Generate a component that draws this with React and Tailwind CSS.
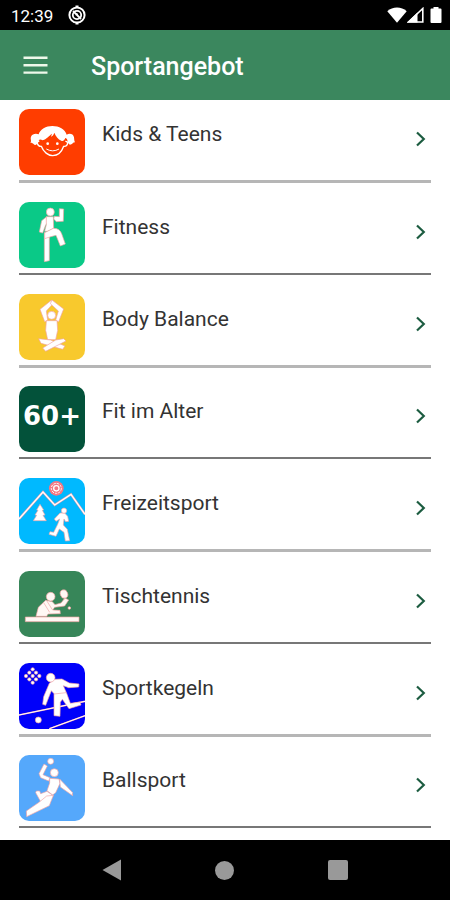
import React from 'react';

const FIGURE = { fill: '#fff', stroke: '#f0a3a3', strokeWidth: 2, strokeLinejoin: 'round' };

const KidsIcon = () => (
  <svg viewBox="27 27 198 198" className="h-full w-full" aria-hidden="true">
    <path
      fill="#fff"
      d="M86 103 C90 88 108 78 127 78 C147 78 165 88 170 104 C178 99 190 101 192 112 C193 118 192 122 195 127 C188 127 187 134 180 134 C175 132 173 127 172 121 C171 116 169 115 166 114 C163 122 158 124 154 122 C144 118 137 108 133 98 C131 105 127 108 123 110 L126 101 C117 107 112 116 98 121 C92 118 88 118 86 122 C84 128 81 133 76 135 C71 134 70 128 61 128 C66 122 60 118 63 110 C67 101 78 100 86 103Z"
    />
    <path
      fill="none"
      stroke="#fff"
      strokeWidth="4"
      d="M88 124 C78 122 81 140 94 139 C100 156 115 167 128 167 C142 167 155 156 161 139 C174 140 177 123 166 124"
    />
    <path fill="none" stroke="#fff" strokeWidth="3" d="M109 147 Q128 158 147 147" />
    <circle cx="113" cy="131" r="4" fill="#fff" />
    <circle cx="142" cy="131" r="4" fill="#fff" />
  </svg>
);

const FitnessIcon = () => (
  <svg viewBox="27 33 198 198" className="h-full w-full" aria-hidden="true">
    <g {...FIGURE}>
      <path d="M148 53 L161 54 L160 91 L139 92 L131 84 L133 76 L148 77Z" />
      <path d="M110 77 L95 89 L88 123 L98 126 L106 104 L112 94Z" />
      <path d="M109 77 L130 77 L131 112 L113 121 L104 121 L109 101Z" />
      <path d="M103 125 L118 125 L118 209 L103 212Z" />
      <path d="M104 125 L130 112 C143 112 151 117 155 128 L166 159 L151 165 L138 133 L119 138 L104 143Z" />
      <circle cx="121" cy="63" r="12" />
    </g>
  </svg>
);

const BalanceIcon = () => (
  <svg viewBox="27 28 198 198" className="h-full w-full" aria-hidden="true">
    <g {...FIGURE}>
      <path d="M125 46 L129 57 L109 79 L113 107 L104 111 L90 74Z" />
      <path d="M126 46 L161 73 L146 111 L137 107 L145 79 L121 57Z" />
      <path d="M109 108 L141 108 L143 137 L137 165 L113 165 L107 137Z" />
      <path d="M86 162 L122 166 L165 184 L158 194 L93 176Z" />
      <path d="M161 162 L168 169 L107 200 L98 190 L137 166Z" />
      <circle cx="125" cy="92" r="12" />
    </g>
  </svg>
);

const LeisureIcon = () => (
  <svg viewBox="27 27 198 198" className="h-full w-full" aria-hidden="true">
    <path d="M27 150 L99 69 L134 108 L183 76 L225 136" fill="none" stroke="#e89aa8" strokeWidth="7" />
    <path d="M27 150 L99 69 L134 108 L183 76 L225 136" fill="none" stroke="#fff" strokeWidth="4" />
    <circle cx="139" cy="58" r="22" fill="#f47883" />
    <circle cx="139" cy="58" r="15" fill="none" stroke="#fff" strokeWidth="3" strokeDasharray="7 3" />
    <circle cx="139" cy="58" r="8" fill="#f47883" stroke="#fff" strokeWidth="4" />
    <g {...FIGURE}>
      <path d="M90 106 L101 123 L97 124 L105 138 L99 139 L109 155 L70 155 L80 139 L75 138 L84 124 L80 123Z" />
      <path d="M150 132 L164 132 L173 142 L176 157 L167 158 L162 150 L160 168 L172 181 L179 215 L166 216 L162 190 L148 180 L138 202 L117 196 L120 188 L131 190 L143 166 L149 150 L138 157 L133 150Z" />
      <circle cx="162" cy="125" r="8" />
    </g>
  </svg>
);

const TableTennisIcon = () => (
  <svg viewBox="27 30 198 198" className="h-full w-full" aria-hidden="true">
    <g {...FIGURE} fill="#fff8f4">
      <path d="M78 166 L85 139 L107 118 L127 122 L135 131 L153 126 L165 111 L176 117 L164 135 L134 139 L128 147 L150 148 L151 158 L114 159 L110 166Z" />
      <path d="M101 125 L119 154 M110 119 L127 146" fill="none" />
      <path d="M166 110 L162 116" fill="none" />
      <circle cx="122" cy="107" r="13" />
      <ellipse cx="162" cy="99" rx="11" ry="13" transform="rotate(-20 162 99)" />
      <rect x="46" y="168" width="161" height="14" />
      <circle cx="178" cy="141" r="4" />
    </g>
  </svg>
);

const BowlingIcon = () => (
  <svg viewBox="27 30 198 198" className="h-full w-full" aria-hidden="true">
    <path d="M27 186 L225 145 M118 227 L225 188" fill="none" stroke="#ef8f9c" strokeWidth="5" />
    <path d="M27 186 L225 145 M118 227 L225 188" fill="none" stroke="#fff" strokeWidth="3" />
    <g {...FIGURE}>
      <path d="M118 91 L134 79 L156 78 L178 90 L207 93 L206 102 L176 104 L160 98 L170 121 L181 151 L210 147 L213 156 L177 167 L157 139 L151 148 L150 190 L132 188 L132 122 L124 113 L107 157 L98 154 L101 131Z" />
      <path d="M132 123 L168 119" fill="none" />
      <circle cx="122" cy="74" r="13" />
      <circle cx="85" cy="201" r="9" />
      <circle cx="68" cy="49" r="5" />
      <circle cx="58" cy="59" r="5" />
      <circle cx="78" cy="59" r="5" />
      <circle cx="48" cy="69" r="5" />
      <circle cx="68" cy="69" r="5" />
      <circle cx="88" cy="69" r="5" />
      <circle cx="58" cy="79" r="5" />
      <circle cx="78" cy="79" r="5" />
      <circle cx="68" cy="89" r="5" />
    </g>
  </svg>
);

const BallIcon = () => (
  <svg viewBox="27 31 198 198" className="h-full w-full" aria-hidden="true">
    <g {...FIGURE}>
      <path d="M102 58 L112 64 L99 90 L120 99 L116 109 L92 99 L87 87Z" />
      <path d="M119 101 L147 103 L150 116 L137 144 L128 151 L111 138 L119 115Z" />
      <path d="M149 103 L187 143 L188 153 L151 127Z" />
      <path d="M111 140 L130 153 L117 174 L92 171 L77 144 L79 139 L89 139 L92 147Z" />
      <path d="M130 152 L118 183 L50 216 L49 199 L87 173 L110 154Z" />
      <circle cx="133" cy="84" r="12" />
      <circle cx="122" cy="50" r="9" />
    </g>
  </svg>
);

const SeniorIcon = () => (
  <span className="font-['DejaVu_Sans',sans-serif] text-[26px] leading-none font-bold text-white pb-1.5">60+</span>
);

const sports = [
  { name: 'Kids & Teens', color: 'bg-[#ff3d00]', icon: KidsIcon },
  { name: 'Fitness', color: 'bg-[#0ac987]', icon: FitnessIcon },
  { name: 'Body Balance', color: 'bg-[#f8c92d]', icon: BalanceIcon },
  { name: 'Fit im Alter', color: 'bg-[#03523a]', icon: SeniorIcon },
  { name: 'Freizeitsport', color: 'bg-[#00b9ff]', icon: LeisureIcon },
  { name: 'Tischtennis', color: 'bg-[#378659]', icon: TableTennisIcon },
  { name: 'Sportkegeln', color: 'bg-[#0000fa]', icon: BowlingIcon },
  { name: 'Ballsport', color: 'bg-[#55a8fb]', icon: BallIcon },
];

const StatusBar = () => (
  <div className="flex h-[30px] items-center bg-black pr-2 pl-[11px] text-white">
    <span className="pt-0.5 text-[17px] leading-none">12:39</span>
    <svg viewBox="0 0 20 20" className="ml-3.5 h-5 w-5" fill="none" stroke="currentColor">
      <circle cx="10" cy="10" r="7.6" strokeWidth="2" />
      <circle cx="10" cy="10" r="4.2" strokeWidth="1.8" />
      <path d="M6 6 L14 14 M9 10.5 L10.5 8.5" strokeWidth="1.8" />
      <path d="M10 .5 V2 M10 18 V19.5" strokeWidth="3" />
    </svg>
    <div className="ml-auto flex items-center">
      <svg viewBox="0 0 20 16" className="h-4 w-5" fill="currentColor">
        <path d="M.3 4.2 C5.5 -.8 14.5 -.8 19.7 4.2 L10 15.8Z" />
      </svg>
      <svg viewBox="0 0 17 16" className="h-4 w-[17px]">
        <path d="M1.5 15 L15.8 1.5 V15Z" fill="none" stroke="currentColor" strokeWidth="1.6" />
        <path d="M0 15.6 L10.5 5.5 V15.6Z" fill="currentColor" />
      </svg>
      <svg viewBox="0 0 12 16" className="ml-1.5 h-4 w-3" fill="currentColor">
        <path d="M3.5 0 H8.5 V1.4 H10.5 Q11.5 1.4 11.5 2.4 V15 Q11.5 16 10.5 16 H1.5 Q.5 16 .5 15 V2.4 Q.5 1.4 1.5 1.4 H3.5Z" />
      </svg>
    </div>
  </div>
);

const Header = () => (
  <header className="flex h-[70px] items-center bg-[#3b875e] pl-[23px] text-white">
    <button type="button" aria-label="Menü" className="h-6 w-[25px]">
      <svg viewBox="0 0 25 24" className="h-6 w-[25px]" stroke="#eef8ea" strokeWidth="2.4">
        <path d="M.5 4.8 H24.5 M.5 12.2 H24.5 M.5 19.6 H24.5" />
      </svg>
    </button>
    <h1 className="ml-[43px] pt-1 text-[25px] leading-8 font-medium">Sportangebot</h1>
  </header>
);

const SportRow = ({ sport, light }) => {
  const Icon = sport.icon;
  return (
    <li className="flex-1">
      <a
        href="#"
        className={`flex items-start pt-[9px] ${
          light ? 'h-[83px] border-b-3 border-[#b6b6b6]' : 'h-[82px] border-b-2 border-[#777777]'
        }`}
      >
        <span
          className={`flex h-[66px] w-[66px] items-center justify-center overflow-hidden rounded-[10px] ${sport.color}`}
        >
          <Icon />
        </span>
        <span className="ml-[17px] pt-2.5 text-[21px] leading-[30px] text-[#333333]">{sport.name}</span>
        <svg
          viewBox="0 0 12 16"
          className="mt-[22px] mr-1 ml-auto h-4 w-3"
          fill="none"
          stroke="#1c5c40"
          strokeWidth="2.2"
        >
          <path d="M2 1.5 L8.8 8 L2 14.5" />
        </svg>
      </a>
    </li>
  );
};

const NavigationBar = () => (
  <nav className="grid h-[60px] grid-cols-3 items-center justify-items-center bg-black px-14 text-[#999999]">
    <button type="button" aria-label="Zurück">
      <svg viewBox="0 0 20 22" className="h-[22px] w-5" fill="currentColor">
        <path d="M.5 11 L19 .5 V21.5Z" />
      </svg>
    </button>
    <button type="button" aria-label="Startseite" className="h-[19px] w-[19px] rounded-full bg-[#999999]" />
    <button type="button" aria-label="Übersicht" className="h-5 w-5 rounded-xs bg-[#999999]" />
  </nav>
);

const App = () => (
  <div className="flex min-h-screen flex-col bg-white font-[Roboto,sans-serif]">
    <StatusBar />
    <Header />
    <main className="flex flex-1 flex-col px-[19px] pb-0.5">
      <ul className="flex flex-1 flex-col">
        {sports.map((sport, index) => (
          <SportRow key={sport.name} sport={sport} light={index % 2 === 0} />
        ))}
      </ul>
    </main>
    <NavigationBar />
  </div>
);

export default App;
